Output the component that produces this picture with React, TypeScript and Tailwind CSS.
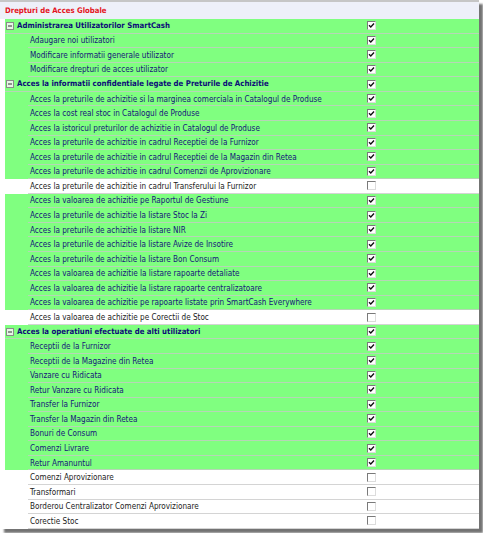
import React from 'react';

type Row =
  | { kind: 'group'; label: string }
  | { kind: 'item'; label: string; on: boolean };

const g = (label: string): Row => ({ kind: 'group', label });
const i = (label: string, on = true): Row => ({ kind: 'item', label, on });

const rows: Row[] = [
  g('Administrarea Utilizatorilor SmartCash'),
  i('Adaugare noi utilizatori'),
  i('Modificare informatii generale utilizator'),
  i('Modificare drepturi de acces utilizator'),
  g('Acces la informatii confidentiale legate de Preturile de Achizitie'),
  i('Acces la preturile de achizitie si la marginea comerciala in Catalogul de Produse'),
  i('Acces la cost real stoc in Catalogul de Produse'),
  i('Acces la istoricul preturilor de achizitie in Catalogul de Produse'),
  i('Acces la preturile de achizitie in cadrul Receptiei de la Furnizor'),
  i('Acces la preturile de achizitie in cadrul Receptiei de la Magazin din Retea'),
  i('Acces la preturile de achizitie in cadrul Comenzii de Aprovizionare'),
  i('Acces la preturile de achizitie in cadrul Transferului la Furnizor', false),
  i('Acces la valoarea de achizitie pe Raportul de Gestiune'),
  i('Acces la preturile de achizitie la listare Stoc la Zi'),
  i('Acces la preturile de achizitie la listare NIR'),
  i('Acces la preturile de achizitie la listare Avize de Insotire'),
  i('Acces la preturile de achizitie la listare Bon Consum'),
  i('Acces la valoarea de achizitie la listare rapoarte detaliate'),
  i('Acces la valoarea de achizitie la listare rapoarte centralizatoare'),
  i('Acces la valoarea de achizitie pe rapoarte listate prin SmartCash Everywhere'),
  i('Acces la valoarea de achizitie pe Corectii de Stoc', false),
  g('Acces la operatiuni efectuate de alti utilizatori'),
  i('Receptii de la Furnizor'),
  i('Receptii de la Magazine din Retea'),
  i('Vanzare cu Ridicata'),
  i('Retur Vanzare cu Ridicata'),
  i('Transfer la Furnizor'),
  i('Transfer la Magazin din Retea'),
  i('Bonuri de Consum'),
  i('Comenzi Livrare'),
  i('Retur Amanuntul'),
  i('Comenzi Aprovizionare', false),
  i('Transformari', false),
  i('Borderou Centralizator Comenzi Aprovizionare', false),
  i('Corectie Stoc', false),
];

function CheckBox({ on }: { on: boolean }): React.ReactElement {
  return (
    <span className="w-[9px] h-[9px] box-border border border-t-[#7a7a7a] border-l-[#7a7a7a] border-r-[#dcdcdc] border-b-[#dcdcdc] bg-white flex items-center justify-center">
      {on && (
        <svg width="7" height="7" viewBox="0 0 7 7">
          <path d="M1 3.2 L2.8 5 L6 1.6" fill="none" stroke="#111" strokeWidth="1.4" />
        </svg>
      )}
    </span>
  );
}

function Minus(): React.ReactElement {
  return (
    <svg width="8" height="8" viewBox="0 0 8 8" className="shrink-0">
      <rect x="0.5" y="0.5" width="7" height="7" fill="#e6f6e6" stroke="#8a8a8a" />
      <line x1="2" y1="4" x2="6" y2="4" stroke="#333" strokeWidth="1" />
    </svg>
  );
}

export default function App(): React.ReactElement {
  return (
    <div className="w-[483px] h-[533px] bg-white font-['DejaVu_Sans_Condensed','DejaVu_Sans',sans-serif]">
      <div className="w-[479px] h-[529px] bg-white border-t-2 border-[#c6c6c6] shadow-[4px_4px_2px_rgba(0,0,0,0.55)] flex flex-col">
        {/* Header */}
        <div className="h-[17px] bg-[#eef0f9] flex items-center pl-[5px]">
          <span className="text-[7.7px] font-bold text-[#e4141c] leading-none">Drepturi de Acces Globale</span>
        </div>

        {/* Tree rows */}
        <div className="flex-1 flex flex-col pl-[5px]">
          {rows.map((r, idx) => {
            if (r.kind === 'group') {
              return (
                <div key={idx} className="h-[14.57px] box-border border-b border-[#b6d6b6] bg-[#80ff80] flex items-center">
                  <span className="w-[12px] flex justify-start pl-[1px]">
                    <Minus />
                  </span>
                  <span className="flex-1 text-[7.75px] font-bold text-[#0c0c78] leading-none whitespace-nowrap">{r.label}</span>
                  <span className="w-[112px] flex items-center">
                    <CheckBox on />
                  </span>
                </div>
              );
            }
            const bg = r.on ? 'bg-[#80ff80]' : 'bg-white';
            return (
              <div key={idx} className={`h-[14.57px] flex ${bg}`}>
                <span className="w-[23px] shrink-0" />
                <div
                  className={`flex-1 box-border border-b flex items-center ${
                    r.on ? 'border-[#b6d6b6]' : 'border-[#d4d4d4]'
                  }`}
                >
                  <span
                    className={`flex-1 pl-[2px] text-[8.1px] leading-none whitespace-nowrap ${
                      r.on ? 'text-[#14147a]' : 'text-[#1a1a1a]'
                    }`}
                  >
                    {r.label}
                  </span>
                  <span className="w-[112px] flex items-center">
                    <CheckBox on={r.on} />
                  </span>
                </div>
              </div>
            );
          })}
        </div>
      </div>
    </div>
  );
}
